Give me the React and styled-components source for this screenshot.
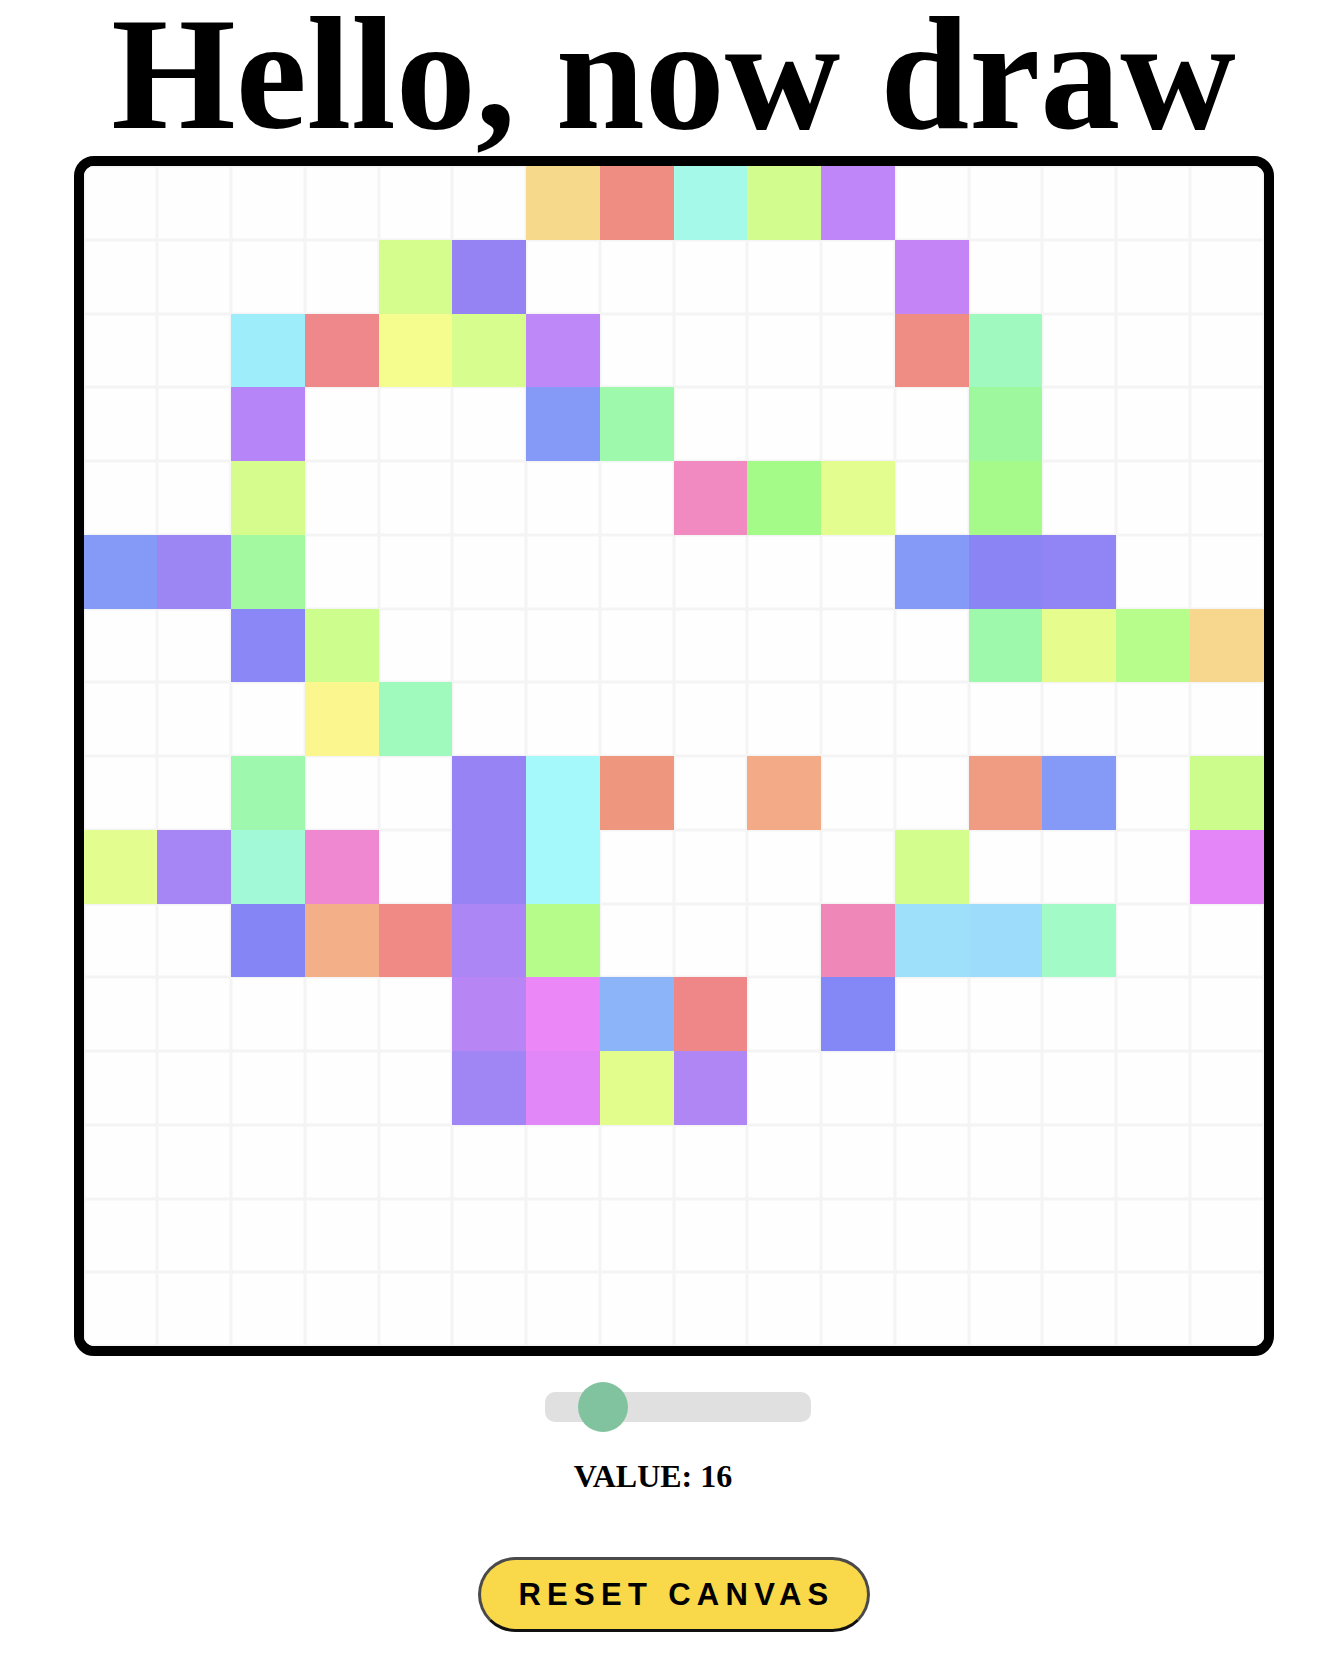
import React, { useState } from "react";
import styled, { createGlobalStyle } from "styled-components";

const SIZE = 16;

// painted cells per row: [column, colour]
const START = [
  [[6, "#f7d98b"], [7, "#f08d83"], [8, "#a4f9e9"], [9, "#d2fd8e"], [10, "#bf86f9"]],
  [[4, "#d4fd8e"], [5, "#9582f3"], [11, "#c484f5"]],
  [[2, "#9dedfa"], [3, "#ef888a"], [4, "#f5fd8e"], [5, "#d6fd8e"], [6, "#be88f9"], [11, "#ef8c84"], [12, "#a0f9be"]],
  [[2, "#b685f7"], [6, "#8599f6"], [7, "#9ef9ad"], [12, "#9ef99e"]],
  [[2, "#d6fc8e"], [8, "#f08ac0"], [9, "#a5fb88"], [10, "#e3fd8e"], [12, "#a5fa8a"]],
  [[0, "#8599f6"], [1, "#9b86f4"], [2, "#a2f9a0"], [11, "#8599f6"], [12, "#8a84f4"], [13, "#9184f5"]],
  [[2, "#8b87f6"], [3, "#cdfd8c"], [12, "#9ef9ac"], [13, "#e6fd8e"], [14, "#b6fd8b"], [15, "#f7d68d"]],
  [[3, "#fbf68e"], [4, "#a0fabe"]],
  [[2, "#9ef9ae"], [5, "#9883f4"], [6, "#a6f9fa"], [7, "#ef967f"], [9, "#f3aa87"], [12, "#f09c83"], [13, "#8599f6"], [15, "#ccfd8c"]],
  [[0, "#e3fd8e"], [1, "#a685f5"], [2, "#a1f9d8"], [3, "#ef88d0"], [5, "#9883f4"], [6, "#a6f9fa"], [11, "#d3fd8c"], [15, "#e486f7"]],
  [[2, "#8585f6"], [3, "#f3af88"], [4, "#ef8a85"], [5, "#ac86f5"], [6, "#b5fc8a"], [10, "#ef88b8"], [11, "#9ee0fa"], [12, "#9ddcfa"], [13, "#a2fac6"]],
  [[5, "#b885f5"], [6, "#ec87f7"], [7, "#8cb4f9"], [8, "#ef8789"], [10, "#8388f6"]],
  [[5, "#a085f5"], [6, "#e287f7"], [7, "#e3fd8c"], [8, "#b086f5"]],
  [],
  [],
  [],
];

function buildCells() {
  const cells = Array.from({ length: SIZE * SIZE }, () => null);
  START.forEach((row, r) => {
    row.forEach(([c, color]) => {
      cells[r * SIZE + c] = color;
    });
  });
  return cells;
}

const randomColor = () => `hsl(${Math.floor(Math.random() * 360)}, 90%, 75%)`;

function App() {
  const [cells, setCells] = useState(buildCells);
  const [value, setValue] = useState(16);

  const paint = (i) => {
    setCells((prev) => prev.map((c, j) => (j === i ? randomColor() : c)));
  };

  return (
    <>
      <GlobalStyle />
      <Page>
        <Title>Hello, now draw</Title>
        <Canvas>
          {cells.map((color, i) => (
            <Cell key={i} $color={color} onMouseEnter={() => paint(i)} />
          ))}
        </Canvas>
        <Slider
          type="range"
          min="1"
          max="100"
          value={value}
          onChange={(e) => setValue(Number(e.target.value))}
        />
        <ValueLabel>VALUE: {value}</ValueLabel>
        <ResetButton onClick={() => setCells(Array(SIZE * SIZE).fill(null))}>
          RESET CANVAS
        </ResetButton>
      </Page>
    </>
  );
}

export default App;

const GlobalStyle = createGlobalStyle`
  body {
    margin: 0;
    background: #fff;
    font-family: "Liberation Serif", "Times New Roman", serif;
  }
`;

const Page = styled.div`
  display: flex;
  flex-direction: column;
  align-items: center;
  padding: 0 0 40px 8px;
`;

const Title = styled.h1`
  margin: 0;
  font-family: "Liberation Serif", "Times New Roman", serif;
  font-size: 160px;
  font-weight: bold;
  line-height: 148px;
  color: #000;
`;

const Canvas = styled.div`
  margin-top: 8px;
  width: 1200px;
  height: 1200px;
  box-sizing: border-box;
  border: 10px solid #000;
  border-radius: 20px;
  overflow: hidden;
  display: grid;
  grid-template-columns: repeat(${SIZE}, 1fr);
  grid-template-rows: repeat(${SIZE}, 1fr);
  background: #fefefe;
`;

const Cell = styled.div`
  background: ${(p) => p.$color || "#fefefe"};
  box-shadow: ${(p) => (p.$color ? "none" : "inset 0 0 0 1.5px #f4f4f4")};
`;

const Slider = styled.input`
  -webkit-appearance: none;
  appearance: none;
  margin: 36px 0 0 9px;
  width: 266px;
  height: 30px;
  border-radius: 10px;
  background: #e0e0e0;
  outline: none;

  &::-webkit-slider-thumb {
    -webkit-appearance: none;
    appearance: none;
    width: 50px;
    height: 50px;
    border-radius: 50%;
    background: #82c39f;
    cursor: pointer;
  }
`;

const ValueLabel = styled.p`
  margin: 36px 41px 0 0;
  font-family: "Liberation Serif", "Times New Roman", serif;
  font-size: 32px;
  font-weight: bold;
  line-height: 36px;
  color: #000;
`;

const ResetButton = styled.button`
  margin-top: 63px;
  width: 392px;
  height: 75px;
  box-sizing: border-box;
  border: 3px solid #4a4a4a;
  border-bottom-color: #111;
  border-radius: 40px;
  background: #f9d84a;
  font-family: "Liberation Sans", Arial, sans-serif;
  font-size: 31px;
  font-weight: bold;
  letter-spacing: 6.3px;
  padding: 0 0 0 6px;
  color: #000;
  cursor: pointer;
`;
